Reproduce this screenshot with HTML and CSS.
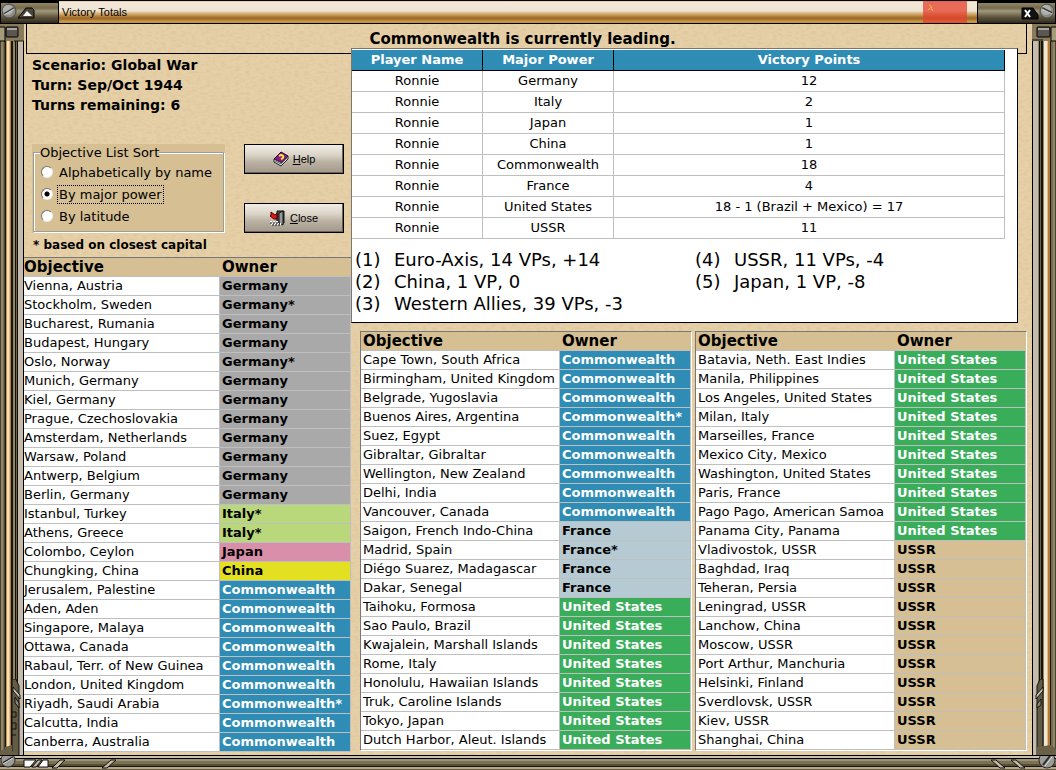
FILE: index.html
```html
<!DOCTYPE html>
<html lang="en">
<head>
<meta charset="utf-8">
<title>Victory Totals</title>
<link rel="stylesheet" href="styles.css">
</head>
<body>
<div class="window">
<header class="titlebar">
  <div class="cap cap-left">
    <svg class="screw" viewBox="0 0 16 16" aria-hidden="true"><circle cx="8" cy="8" r="7" fill="#8b8b88" stroke="#4d4a42"/><circle cx="7" cy="7" r="5" fill="#adb0ae"/><path d="M3 11L13 5" stroke="#3e3c38" stroke-width="2"/><path d="M3 12L13 6" stroke="#d8d8d0"/></svg>
    <button class="roll" aria-label="Roll up"><svg viewBox="0 0 18 12"><path d="M1 11L9 1H15L17 3V11Z" fill="#4c4738" stroke="#000"/><path d="M6 9L10 4L15 9Z" fill="#fff"/></svg></button>
  </div>
  <h1 class="title">Victory Totals</h1>
  <svg class="flag" viewBox="0 0 44 22" aria-hidden="true"><rect width="44" height="22" fill="#e5402f" opacity=".75"/><path d="M6 4q4 1 2 5M5 9l4-4M9 8l1 2" fill="none" stroke="#f4b04c"/></svg>
  <div class="cap cap-right">
    <button class="shut" aria-label="Close window"><svg viewBox="0 0 18 13"><path d="M1 1H12L17 8V12H1Z" fill="#111" stroke="#000"/><path d="M4 3L9 10M9 3L4 10" stroke="#fff" stroke-width="2"/></svg></button>
    <svg class="screw" viewBox="0 0 16 16" aria-hidden="true"><circle cx="8" cy="8" r="7" fill="#8b8b88" stroke="#4d4a42"/><circle cx="7" cy="7" r="5" fill="#adb0ae"/><path d="M3 5L13 10" stroke="#3e3c38" stroke-width="2"/><path d="M3 6L13 11" stroke="#d8d8d0"/></svg>
  </div>
</header>
<div class="middle">
  <div class="rail rail-left">
    <svg viewBox="0 0 24 20" aria-hidden="true"><rect width="24" height="17" fill="#877b5c"/><path d="M0 3H5V17H0" fill="#a69b78" stroke="#000"/><rect x="6" y="3" width="12" height="10" rx="1" fill="#5b5750" stroke="#000"/><path d="M7 5H17" stroke="#aaa69e" stroke-width="2"/><path d="M14 17H24" stroke="#221d12"/></svg>
    <svg viewBox="0 0 24 76" aria-hidden="true"><path d="M12 0H16L19 7V76H12Z" fill="#625b45" stroke="#111"/><path d="M13 8L20 16V20L13 12Z" fill="#c8c0b0" stroke="#111"/><path d="M15 18L19 24V29L15 24Z" fill="#8f8668" stroke="#111"/><path d="M12 33H16V38H12M12 44H16V50H12M12 56H16" fill="none" stroke="#111"/><path d="M5 70V68L12 66V72L19 76H0V72Z" fill="#6a6046"/></svg>
  </div>
  <main class="content">
    <p class="leader">Commonwealth is currently leading.</p>
    <div class="columns">
      <section class="side">
        <p class="info">Scenario: Global War<br>Turn: Sep/Oct 1944<br>Turns remaining: 6</p>
        <div class="controls">
          <fieldset class="sort">
            <legend>Objective List Sort</legend>
            <label><input type="radio" name="sort"><span>Alphabetically by name</span></label>
            <label><input type="radio" name="sort" checked><span class="focus">By major power</span></label>
            <label><input type="radio" name="sort"><span>By latitude</span></label>
          </fieldset>
          <div class="buttons">
            <button class="push"><svg viewBox="0 0 16 16" aria-hidden="true"><path d="M1 8L8 1L15 5L9 12Z" fill="#8c1a8c" stroke="#200020"/><path d="M1 8V11L8 15L15 8V5L9 12Z" fill="#e8e8e8" stroke="#222"/><path d="M2 10L8 13L14 7" fill="none" stroke="#666"/><path d="M6 5Q9 3 10 5T8 8" fill="none" stroke="#ffec28" stroke-width="2"/></svg><span><u>H</u>elp</span></button>
            <button class="push"><svg viewBox="0 0 16 16" aria-hidden="true"><path d="M7 1H14V13H7Z" fill="#555" stroke="#111"/><path d="M9 3L13 1V15L9 13Z" fill="#999" stroke="#111"/><path d="M1 2V5L0 6L4 9H7V3L5 5Z" fill="#e51414" stroke="#400"/><path d="M0 12H9M1 14H11" stroke="#fff" stroke-width="2" stroke-dasharray="2 1"/><path d="M0 13H9M2 15H11" stroke="#111" stroke-dasharray="2 1"/></svg><span><u>C</u>lose</span></button>
          </div>
        </div>
        <p class="note">* based on closest capital</p>
        <table class="list flush">
          <thead><tr><th>Objective</th><th>Owner</th></tr></thead>
          <tbody>
          <tr><td>Vienna, Austria</td><td class="germany">Germany</td></tr>
          <tr><td>Stockholm, Sweden</td><td class="germany">Germany*</td></tr>
          <tr><td>Bucharest, Rumania</td><td class="germany">Germany</td></tr>
          <tr><td>Budapest, Hungary</td><td class="germany">Germany</td></tr>
          <tr><td>Oslo, Norway</td><td class="germany">Germany*</td></tr>
          <tr><td>Munich, Germany</td><td class="germany">Germany</td></tr>
          <tr><td>Kiel, Germany</td><td class="germany">Germany</td></tr>
          <tr><td>Prague, Czechoslovakia</td><td class="germany">Germany</td></tr>
          <tr><td>Amsterdam, Netherlands</td><td class="germany">Germany</td></tr>
          <tr><td>Warsaw, Poland</td><td class="germany">Germany</td></tr>
          <tr><td>Antwerp, Belgium</td><td class="germany">Germany</td></tr>
          <tr><td>Berlin, Germany</td><td class="germany">Germany</td></tr>
          <tr><td>Istanbul, Turkey</td><td class="italy">Italy*</td></tr>
          <tr><td>Athens, Greece</td><td class="italy">Italy*</td></tr>
          <tr><td>Colombo, Ceylon</td><td class="japan">Japan</td></tr>
          <tr><td>Chungking, China</td><td class="china">China</td></tr>
          <tr><td>Jerusalem, Palestine</td><td class="commonwealth">Commonwealth</td></tr>
          <tr><td>Aden, Aden</td><td class="commonwealth">Commonwealth</td></tr>
          <tr><td>Singapore, Malaya</td><td class="commonwealth">Commonwealth</td></tr>
          <tr><td>Ottawa, Canada</td><td class="commonwealth">Commonwealth</td></tr>
          <tr><td>Rabaul, Terr. of New Guinea</td><td class="commonwealth">Commonwealth</td></tr>
          <tr><td>London, United Kingdom</td><td class="commonwealth">Commonwealth</td></tr>
          <tr><td>Riyadh, Saudi Arabia</td><td class="commonwealth">Commonwealth*</td></tr>
          <tr><td>Calcutta, India</td><td class="commonwealth">Commonwealth</td></tr>
          <tr><td>Canberra, Australia</td><td class="commonwealth">Commonwealth</td></tr>
          </tbody>
        </table>
      </section>
      <section class="results">
        <div class="panel">
          <table class="scores">
            <thead><tr><th>Player Name</th><th>Major Power</th><th>Victory Points</th></tr></thead>
            <tbody>
            <tr><td>Ronnie</td><td>Germany</td><td>12</td></tr>
            <tr><td>Ronnie</td><td>Italy</td><td>2</td></tr>
            <tr><td>Ronnie</td><td>Japan</td><td>1</td></tr>
            <tr><td>Ronnie</td><td>China</td><td>1</td></tr>
            <tr><td>Ronnie</td><td>Commonwealth</td><td>18</td></tr>
            <tr><td>Ronnie</td><td>France</td><td>4</td></tr>
            <tr><td>Ronnie</td><td>United States</td><td>18 - 1 (Brazil + Mexico) = 17</td></tr>
            <tr><td>Ronnie</td><td>USSR</td><td>11</td></tr>
            </tbody>
          </table>
          <div class="ranking">
            <dl>
              <dt>(1)</dt><dd>Euro-Axis, 14 VPs, +14</dd>
              <dt>(2)</dt><dd>China, 1 VP, 0</dd>
              <dt>(3)</dt><dd>Western Allies, 39 VPs, -3</dd>
            </dl>
            <dl>
              <dt>(4)</dt><dd>USSR, 11 VPs, -4</dd>
              <dt>(5)</dt><dd>Japan, 1 VP, -8</dd>
            </dl>
          </div>
        </div>
        <div class="pair">
          <table class="list boxed">
            <thead><tr><th>Objective</th><th>Owner</th></tr></thead>
            <tbody>
            <tr><td>Cape Town, South Africa</td><td class="commonwealth">Commonwealth</td></tr>
            <tr><td>Birmingham, United Kingdom</td><td class="commonwealth">Commonwealth</td></tr>
            <tr><td>Belgrade, Yugoslavia</td><td class="commonwealth">Commonwealth</td></tr>
            <tr><td>Buenos Aires, Argentina</td><td class="commonwealth">Commonwealth*</td></tr>
            <tr><td>Suez, Egypt</td><td class="commonwealth">Commonwealth</td></tr>
            <tr><td>Gibraltar, Gibraltar</td><td class="commonwealth">Commonwealth</td></tr>
            <tr><td>Wellington, New Zealand</td><td class="commonwealth">Commonwealth</td></tr>
            <tr><td>Delhi, India</td><td class="commonwealth">Commonwealth</td></tr>
            <tr><td>Vancouver, Canada</td><td class="commonwealth">Commonwealth</td></tr>
            <tr><td>Saigon, French Indo-China</td><td class="france">France</td></tr>
            <tr><td>Madrid, Spain</td><td class="france">France*</td></tr>
            <tr><td>Diégo Suarez, Madagascar</td><td class="france">France</td></tr>
            <tr><td>Dakar, Senegal</td><td class="france">France</td></tr>
            <tr><td>Taihoku, Formosa</td><td class="us">United States</td></tr>
            <tr><td>Sao Paulo, Brazil</td><td class="us">United States</td></tr>
            <tr><td>Kwajalein, Marshall Islands</td><td class="us">United States</td></tr>
            <tr><td>Rome, Italy</td><td class="us">United States</td></tr>
            <tr><td>Honolulu, Hawaiian Islands</td><td class="us">United States</td></tr>
            <tr><td>Truk, Caroline Islands</td><td class="us">United States</td></tr>
            <tr><td>Tokyo, Japan</td><td class="us">United States</td></tr>
            <tr><td>Dutch Harbor, Aleut. Islands</td><td class="us">United States</td></tr>
            </tbody>
          </table>
          <table class="list boxed">
            <thead><tr><th>Objective</th><th>Owner</th></tr></thead>
            <tbody>
            <tr><td>Batavia, Neth. East Indies</td><td class="us">United States</td></tr>
            <tr><td>Manila, Philippines</td><td class="us">United States</td></tr>
            <tr><td>Los Angeles, United States</td><td class="us">United States</td></tr>
            <tr><td>Milan, Italy</td><td class="us">United States</td></tr>
            <tr><td>Marseilles, France</td><td class="us">United States</td></tr>
            <tr><td>Mexico City, Mexico</td><td class="us">United States</td></tr>
            <tr><td>Washington, United States</td><td class="us">United States</td></tr>
            <tr><td>Paris, France</td><td class="us">United States</td></tr>
            <tr><td>Pago Pago, American Samoa</td><td class="us">United States</td></tr>
            <tr><td>Panama City, Panama</td><td class="us">United States</td></tr>
            <tr><td>Vladivostok, USSR</td><td class="ussr">USSR</td></tr>
            <tr><td>Baghdad, Iraq</td><td class="ussr">USSR</td></tr>
            <tr><td>Teheran, Persia</td><td class="ussr">USSR</td></tr>
            <tr><td>Leningrad, USSR</td><td class="ussr">USSR</td></tr>
            <tr><td>Lanchow, China</td><td class="ussr">USSR</td></tr>
            <tr><td>Moscow, USSR</td><td class="ussr">USSR</td></tr>
            <tr><td>Port Arthur, Manchuria</td><td class="ussr">USSR</td></tr>
            <tr><td>Helsinki, Finland</td><td class="ussr">USSR</td></tr>
            <tr><td>Sverdlovsk, USSR</td><td class="ussr">USSR</td></tr>
            <tr><td>Kiev, USSR</td><td class="ussr">USSR</td></tr>
            <tr><td>Shanghai, China</td><td class="ussr">USSR</td></tr>
            </tbody>
          </table>
        </div>
      </section>
    </div>
  </main>
  <div class="rail rail-right">
    <svg viewBox="0 0 24 20" aria-hidden="true"><rect width="24" height="17" fill="#877b5c"/><path d="M24 3H19V17H24" fill="#a69b78" stroke="#000"/><rect x="5" y="3" width="13" height="10" rx="1" fill="#5b5750" stroke="#000"/><path d="M6 5H17" stroke="#aaa69e" stroke-width="2"/><path d="M0 16H11" stroke="#111"/></svg>
    <svg viewBox="0 0 24 76" aria-hidden="true"><path d="M11 0H8L5 7V76H11Z" fill="#625b45" stroke="#111"/><path d="M4 16L11 8V12L4 20Z" fill="#c8c0b0" stroke="#111"/><path d="M5 29V25L9 20V26Z" fill="#8f8668" stroke="#111"/><path d="M5 76V68L19 66L24 70V76Z" fill="#6a6046"/></svg>
  </div>
</div>
<footer class="bottom">
  <svg viewBox="0 0 120 16" aria-hidden="true"><circle cx="8" cy="4" r="7" fill="#9b9c99" stroke="#2d2a22"/><path d="M3 7L13 1" stroke="#2e2c28" stroke-width="2"/><path d="M3 8L13 2" stroke="#ddd"/><path d="M24 4H36L30 11H24ZM43 4H48V11H38Z" fill="#fff" stroke="#111"/><path d="M38 4H42L36 11H32ZM60 4H65L57 12H52ZM111 4H116L107 12H102Z" fill="#c2b8a5" stroke="#111"/></svg>
  <svg viewBox="0 0 70 16" aria-hidden="true"><path d="M5 4H10L19 12H14ZM25 4H30L39 12H34Z" fill="#c2b8a5" stroke="#111"/><circle cx="61" cy="4" r="8" fill="#9b9c99" stroke="#2d2a22"/><path d="M57 9L64 0" stroke="#2e2c28" stroke-width="2"/><path d="M59 10L66 1" stroke="#ddd"/></svg>
</footer>
</div>
</body>
</html>
```

FILE: styles.css
```css
* { box-sizing: border-box; }
body { margin: 0; font: 13px/18px "DejaVu Sans", Verdana, sans-serif; color: #000; background: #111; }
p, h1, dl, dd { margin: 0; }
button { font: inherit; }
.window { display: flex; flex-direction: column; min-height: 100vh; }

.titlebar {
  display: flex; align-items: stretch; height: 24px;
  border-top: 1px solid #000; border-bottom: 1px solid #000;
  background: linear-gradient(#d5b485, #f2e8d8 1px, #efe4d2 10px, #dcb988 12px, #c79a58 14px, #a8752f 16px, #9b6a2c 18px, #c99746 20px, #c28d40);
}
.title { flex: 1; padding-left: 3px; font: 11px/22px "Liberation Sans", Arial, sans-serif; }
.flag { width: 44px; height: 22px; margin-right: 10px; }
.cap {
  display: flex; align-items: center; border: 1px solid #000; border-width: 2px 1px 0;
  background: linear-gradient(#8f8663, #756b4d 5px, #a0977c 8px, #83795d 11px, #5d543f 14px, #423a29 18px, #2c2619);
}
.cap-left { width: 59px; }
.cap-right { width: 79px; justify-content: flex-end; }
.screw { width: 16px; height: 16px; align-self: flex-start; flex: none; }
.roll, .shut { padding: 0; border: 0; background: none; display: flex; }
.roll svg { width: 18px; height: 12px; }
.shut svg { width: 18px; height: 13px; }

.middle { display: flex; flex: 1; }
.rail { width: 24px; flex: none; display: flex; flex-direction: column; justify-content: space-between; }
.rail svg { display: block; width: 24px; }
.rail-left { background: linear-gradient(90deg, #4a4330 0 1px, #8e8466 1px 3px, #766c4f 3px 4px, #4a4330 4px 5px, #1c170c 5px 6px, #c9953f 6px 7px, #f0e0c4 7px 9px, #e0bd84 9px 10px, #b27c34 10px 11px, #17130b 11px 13px, #8d8566 13px 15px, #17130b 15px 16px, #6d6449 16px 17px, #0d0b06 17px 18px, #c4bbad 18px 23px, #000 23px); }
.rail-right { background: linear-gradient(90deg, #000 0 1px, #c4bbad 1px 6px, #8d8566 6px 7px, #0d0b06 7px 8px, #6d6449 8px 9px, #17130b 9px 11px, #8d8566 11px 12px, #f0e6d4 12px 15px, #e0bd84 15px 16px, #b27c34 16px 18px, #1c170c 18px 19px, #766c4f 19px 21px, #8e8466 21px 23px, #4a4330 23px); }

.content {
  flex: 1; min-width: 0; padding-right: 5px;
  background-color: #e6d0a8;
  background-image: url("data:image/svg+xml,%3Csvg xmlns='http://www.w3.org/2000/svg' width='128' height='128'%3E%3Cfilter id='n'%3E%3CfeTurbulence type='fractalNoise' baseFrequency='.2 .38' numOctaves='3' seed='4' stitchTiles='stitch'/%3E%3CfeColorMatrix values='0 0 0 0 .72  0 0 0 0 .54  0 0 0 0 .3  1.5 0 0 0 -.6'/%3E%3C/filter%3E%3Crect width='128' height='128' filter='url(%23n)'/%3E%3C/svg%3E");
}
.leader {
  height: 30px; margin-left: 2px; border: solid #000; border-width: 0 1px 1px;
  text-align: center; font-size: 15px; line-height: 30px; font-weight: bold; padding-right: 8px;
}
.columns { display: flex; }
.side { flex: 0 0 327px; }
.info { padding: 1px 8px 0; font-size: 14px; line-height: 20px; font-weight: bold; }
.controls { display: flex; justify-content: space-between; padding: 29px 7px 0 8px; height: 118px; }
.sort { width: 193px; height: 89px; margin: 0; padding: 0 8px; border: 0; background: #d5bf93; position: relative; }
.sort::before { content: ""; position: absolute; inset: 8px 1px 1px; border: 1px solid #9b9d9c; box-shadow: inset 1px 1px #fff, 1px 1px #fff; }
.sort legend { float: left; width: auto; padding: 0; line-height: 17px; background: #d5bf93; position: relative; }
.sort label { clear: both; display: flex; align-items: center; gap: 4px; height: 22px; position: relative; }
.sort span { line-height: 17px; padding: 0 1px; border: 1px solid transparent; white-space: nowrap; }
.sort .focus { border: 1px dotted #000; }
.sort input { appearance: none; flex: none; width: 12px; height: 12px; margin: 0 0 0 1px; border-radius: 50%; background: #fff; border: 1px solid; border-color: #777 #eee #eee #777; }
.sort input:checked { background: radial-gradient(#000 2px, #fff 3px); }
.buttons { display: flex; flex-direction: column; justify-content: space-between; }
.push {
  width: 100px; height: 30px; padding: 0; display: flex; align-items: center; justify-content: center; gap: 4px;
  border: 1px solid #000; box-shadow: inset -1px -1px #6b6355;
  background: linear-gradient(#f1ede6, #dbd4c8 35%, #bcb3a4 60%, #a1978a); font: 11px/14px "Liberation Sans", Arial, sans-serif;
}
.push svg { width: 16px; height: 16px; }
.note { padding-left: 9px; font-size: 12px; line-height: 24px; font-weight: bold; }

table { border-collapse: separate; border-spacing: 0; table-layout: fixed; }
.list { width: 100%; background: #fff; }
.list th, .list td { height: 19px; padding: 0 0 0 2px; line-height: 18px; text-align: left; white-space: nowrap; border: solid #bfbfbf; border-width: 0 1px 1px 0; }
.list th { font-size: 15px; background: #d5bf93; border-right-color: #d5bf93; }
.list th:last-child, .list td:last-child { width: 131px; }
.list td:last-child { font-weight: bold; }
.flush { border-top: 1px solid #777; }
.flush th:first-child, .flush td:first-child { padding-left: 0; }
.germany { background: #a9a9a9; }
.italy { background: #b9d87b; }
.japan { background: #d98fa9; }
.china { background: #e2e021; }
.commonwealth { background: #2f8db5; color: #fff; }
.france { background: #b6cad3; }
.us { background: #3aad5a; color: #fff; }
.ussr { background: #d5bf93; }

.results { flex: 1; min-width: 0; margin-top: -6px; }
.panel { margin-right: 9px; padding: 1px 12px 7px 0; background: #fff; border: 1px solid #000; border-color: #777 #000 #000 #777; }
.scores { width: 100%; }
.scores th, .scores td { height: 21px; padding: 0; line-height: 20px; text-align: center; border: solid #bfbfbf; border-width: 0 1px 1px 0; }
.scores th { background: #2f8db5; color: #fff; border-color: #000; }
.scores th:nth-child(-n+2) { width: 131px; }
.ranking { display: flex; padding: 10px 0 0 3px; font-size: 18px; line-height: 22px; }
.ranking dl { flex: 0 0 340px; display: grid; grid-template-columns: 39px auto; align-content: start; }
.pair { display: grid; grid-template-columns: 1fr 1fr; gap: 3px; padding: 8px 0 4px 9px; }
.boxed { border: 1px solid; border-color: #777 #fff #fff #777; }

.bottom {
  height: 16px; display: flex; justify-content: space-between; border-top: 1px solid #000; border-bottom: 1px solid #000;
  background: linear-gradient(#c9c0ae 0 2px, #000 2px 3px, #9d9476 3px 5px, #7b7154 5px 8px, #574e38 8px 10px, #1a160c 10px 11px, #b3a88c 11px 13px, #6b6148 13px);
}
.bottom svg { height: 16px; display: block; }
```
